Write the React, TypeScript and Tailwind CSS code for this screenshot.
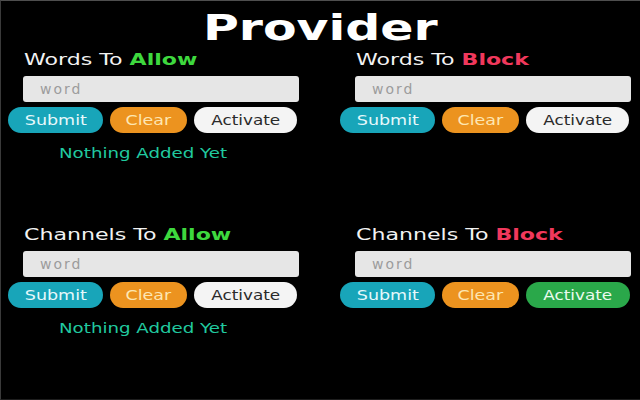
import React from "react";

const font = { fontFamily: '"DejaVu Sans", "Liberation Sans", sans-serif' };

function Section({
  title,
  accent,
  accentClass,
  green,
  empty,
}: {
  title: string;
  accent: string;
  accentClass: string;
  green?: boolean;
  empty?: boolean;
}) {
  return (
    <div className="flex flex-col">
      <div className="ml-4 h-5 text-[16px] leading-5 text-[#f2f2f2] whitespace-nowrap">
        <span className="inline-block origin-left scale-x-[1.38]">
          {title} To <span className={`font-bold ${accentClass}`}>{accent}</span>
        </span>
      </div>
      <input
        placeholder="word"
        className="mt-[6px] ml-[15px] h-[26px] w-[276px] rounded-[3px] bg-[#e6e6e6] pl-[17px] text-[14px] tracking-[2px] text-[#444] outline-none placeholder:text-[#9c9c9c]"
        style={font}
      />
      <div className="mt-[5px] flex gap-[7px]">
        <button className="flex h-[26px] w-[95px] items-center justify-center rounded-full bg-[#18a5b9] text-[14px] text-[#e6f8fb]" style={font}>
          <span className="inline-block scale-x-[1.25]">Submit</span>
        </button>
        <button className="flex h-[26px] w-[77px] items-center justify-center rounded-full bg-[#ec931f] text-[14px] text-[#fde6b2]" style={font}>
          <span className="inline-block scale-x-[1.25]">Clear</span>
        </button>
        <button
          className={
            green
              ? "flex h-[26px] w-[104px] items-center justify-center rounded-full bg-[#2aa84a] text-[14px] text-[#eafbee]"
              : "flex h-[26px] w-[103px] items-center justify-center rounded-full bg-[#f4f4f4] text-[14px] text-[#2a2a2a]"
          }
          style={font}
        >
          <span className="inline-block scale-x-[1.2]">Activate</span>
        </button>
      </div>
      {empty && (
        <div className="mt-[10px] ml-[51px] h-5 text-[14px] leading-5 text-[#20c99f] whitespace-nowrap">
          <span className="inline-block origin-left scale-x-[1.3]">Nothing Added Yet</span>
        </div>
      )}
    </div>
  );
}

export default function App() {
  return (
    <div
      className="h-[400px] w-[640px] overflow-hidden border-t border-l border-b border-t-[#4e4e4e] border-l-[#3a3a3a] border-b-[#1e1e1e] bg-black"
      style={font}
    >
      <div className="flex h-[46px] justify-center pt-[9px]">
        <h1 className="h-9 text-[36px] font-bold leading-9 text-white">
          <span className="inline-block scale-x-[1.36]">Provider</span>
        </h1>
      </div>
      <div className="mt-[3px] grid grid-cols-[292px_292px] gap-x-10 gap-y-[62px] pl-[7px]">
        <Section title="Words" accent="Allow" accentClass="text-[#3ed83e]" empty />
        <Section title="Words" accent="Block" accentClass="text-[#f0385c]" />
        <Section title="Channels" accent="Allow" accentClass="text-[#3ed83e]" empty />
        <Section title="Channels" accent="Block" accentClass="text-[#f0385c]" green />
      </div>
    </div>
  );
}
